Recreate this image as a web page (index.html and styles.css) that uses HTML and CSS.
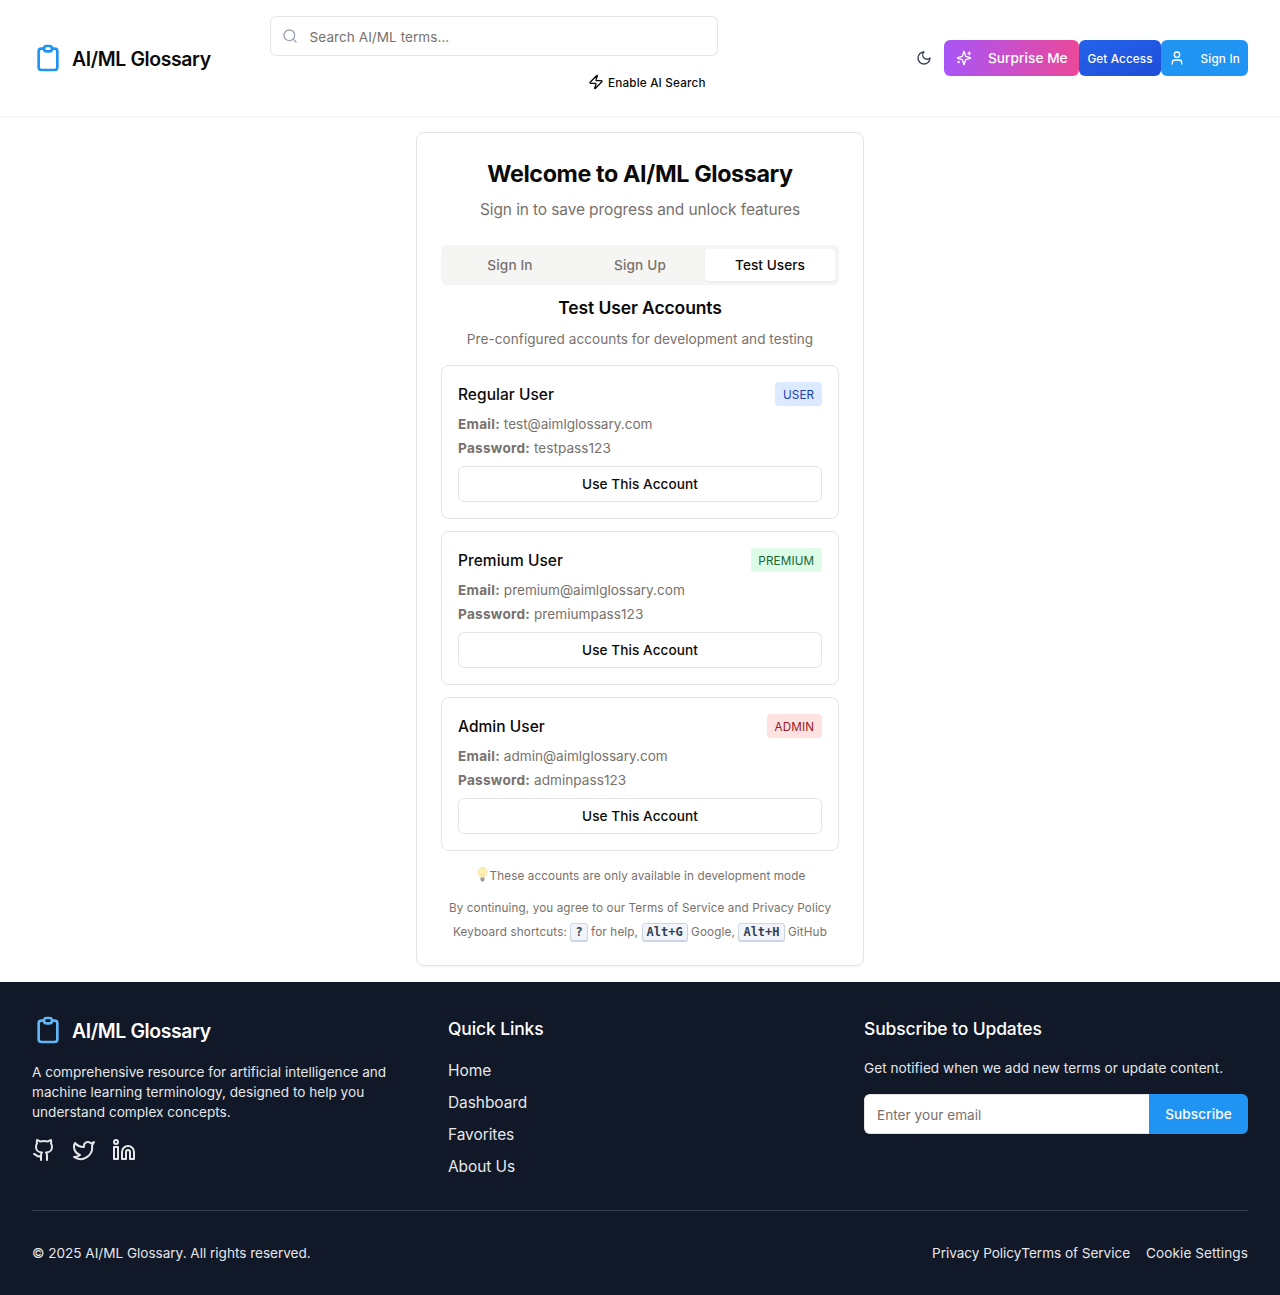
FILE: index.html
```html
<!DOCTYPE html>
<html lang="en">
<head>
<meta charset="utf-8">
<title>AI/ML Glossary</title>
<link rel="stylesheet" href="styles.css">
</head>
<body>
<header class="header">
  <a class="logo">
    <svg class="logo-icon" viewBox="0 0 24 24"><path d="M9 5H7a2 2 0 00-2 2v12a2 2 0 002 2h10a2 2 0 002-2V7a2 2 0 00-2-2h-2M9 5a2 2 0 002 2h2a2 2 0 002-2M9 5a2 2 0 012-2h2a2 2 0 012 2"/></svg>
    <span class="logo-text">AI/ML Glossary</span>
  </a>
  <div class="search">
    <div class="search-box">
      <svg class="icon" viewBox="0 0 24 24"><circle cx="11" cy="11" r="8"/><path d="m21 21-4.3-4.3"/></svg>
      <span>Search AI/ML terms...</span>
    </div>
    <button class="ai-toggle">
      <svg class="icon" viewBox="0 0 24 24"><path d="M4 14a1 1 0 0 1-.78-1.63l9.9-10.2a.5.5 0 0 1 .86.46l-1.92 6.02A1 1 0 0 0 13 10h7a1 1 0 0 1 .78 1.63l-9.9 10.2a.5.5 0 0 1-.86-.46l1.92-6.02A1 1 0 0 0 11 14z"/></svg>
      <span>Enable AI Search</span>
    </button>
  </div>
  <div class="actions">
    <button class="theme"><svg class="icon" viewBox="0 0 24 24"><path d="M12 3a6 6 0 0 0 9 9 9 9 0 1 1-9-9Z"/></svg></button>
    <button class="btn surprise">
      <svg class="icon" viewBox="0 0 24 24"><path d="M9.937 15.5A2 2 0 0 0 8.5 14.063l-6.135-1.582a.5.5 0 0 1 0-.962L8.5 9.936A2 2 0 0 0 9.937 8.5l1.582-6.135a.5.5 0 0 1 .963 0L14.063 8.5A2 2 0 0 0 15.5 9.937l6.135 1.581a.5.5 0 0 1 0 .964L15.5 14.063a2 2 0 0 0-1.437 1.437l-1.582 6.135a.5.5 0 0 1-.963 0z"/><path d="M20 3v4M22 5h-4M4 17v2M5 18H3"/></svg>
      <span>Surprise Me</span>
    </button>
    <button class="btn access">Get Access</button>
    <button class="btn signin">
      <svg class="icon" viewBox="0 0 24 24"><path d="M19 21v-2a4 4 0 0 0-4-4H9a4 4 0 0 0-4 4v2"/><circle cx="12" cy="7" r="4"/></svg>
      <span>Sign In</span>
    </button>
  </div>
</header>

<main class="main">
  <section class="card">
    <h1 class="title">Welcome to AI/ML Glossary</h1>
    <p class="subtitle">Sign in to save progress and unlock features</p>
    <div class="tabs">
      <button class="tab">Sign In</button>
      <button class="tab">Sign Up</button>
      <button class="tab active">Test Users</button>
    </div>
    <h2 class="panel-title">Test User Accounts</h2>
    <p class="panel-text">Pre-configured accounts for development and testing</p>
    <div class="accounts">
      <article class="account">
        <div class="account-head"><h3>Regular User</h3><span class="badge blue">USER</span></div>
        <p class="email"><strong>Email:</strong> test@aimlglossary.com</p>
        <p class="password"><strong>Password:</strong> testpass123</p>
        <button class="use">Use This Account</button>
      </article>
      <article class="account">
        <div class="account-head"><h3>Premium User</h3><span class="badge green">PREMIUM</span></div>
        <p class="email"><strong>Email:</strong> premium@aimlglossary.com</p>
        <p class="password"><strong>Password:</strong> premiumpass123</p>
        <button class="use">Use This Account</button>
      </article>
      <article class="account">
        <div class="account-head"><h3>Admin User</h3><span class="badge red">ADMIN</span></div>
        <p class="email"><strong>Email:</strong> admin@aimlglossary.com</p>
        <p class="password"><strong>Password:</strong> adminpass123</p>
        <button class="use">Use This Account</button>
      </article>
    </div>
    <p class="note">
      <svg class="bulb" viewBox="0 0 12 16"><path d="M6 .8C3.300.8 1.500 2.700 1.500 5.200c0 2 1.500 3.200 2.200 5.300h4.600c.7-2.100 2.200-3.300 2.200-5.300C10.500 2.700 8.700.8 6 .8z" fill="#fdf0b4" stroke="#f5dfa0" stroke-width=".8"/><path d="M5 10V6.500L6 7.300l1-.8V10" fill="none" stroke="#f3cf80" stroke-width=".5"/><path d="M4 10.700h4v2.300L7 14.500H5L4 13z" fill="#9b9b98"/></svg><span>These accounts are only available in development mode</span>
    </p>
    <p class="legal">By continuing, you agree to our Terms of Service and Privacy Policy</p>
    <p class="shortcuts">Keyboard shortcuts: <kbd>?</kbd> for help, <kbd>Alt+G</kbd> Google, <kbd>Alt+H</kbd> GitHub</p>
  </section>
</main>

<footer class="footer">
  <div class="columns">
    <div>
      <a class="logo">
        <svg class="logo-icon" viewBox="0 0 24 24"><path d="M9 5H7a2 2 0 00-2 2v12a2 2 0 002 2h10a2 2 0 002-2V7a2 2 0 00-2-2h-2M9 5a2 2 0 002 2h2a2 2 0 002-2M9 5a2 2 0 012-2h2a2 2 0 012 2"/></svg>
        <span class="logo-text">AI/ML Glossary</span>
      </a>
      <p class="about">A comprehensive resource for artificial intelligence and<br>machine learning terminology, designed to help you<br>understand complex concepts.</p>
      <div class="social">
        <svg viewBox="0 0 24 24"><path d="M15 22v-4a4.800 4.800 0 0 0-1-3.500c3 0 6-2 6-5.500.08-1.250-.27-2.480-1-3.500.28-1.150.28-2.350 0-3.500 0 0-1 0-3 1.500-2.640-.5-5.360-.5-8 0C6 2 5 2 5 2c-.3 1.150-.3 2.350 0 3.500A5.403 5.403 0 0 0 4 9c0 3.500 3 5.500 6 5.500-.39.490-.68 1.050-.85 1.650-.17.600-.22 1.230-.15 1.850v4"/><path d="M9 18c-4.510 2-5-2-7-2"/></svg>
        <svg viewBox="0 0 24 24"><path d="M22 4s-.7 2.100-2 3.400c1.600 10-9.400 17.300-18 11.600 2.200.1 4.400-.6 6-2C3 15.500.5 9.600 3 5c2.200 2.600 5.600 4.100 9 4-.9-4.200 4-6.600 7-3.800 1.100 0 3-1.200 3-1.200z"/></svg>
        <svg viewBox="0 0 24 24"><path d="M16 8a6 6 0 0 1 6 6v7h-4v-7a2 2 0 0 0-2-2 2 2 0 0 0-2 2v7h-4v-7a6 6 0 0 1 6-6z"/><rect width="4" height="12" x="2" y="9"/><circle cx="4" cy="4" r="2"/></svg>
      </div>
    </div>
    <div>
      <h3 class="foot-title">Quick Links</h3>
      <ul class="links"><li>Home</li><li>Dashboard</li><li>Favorites</li><li>About Us</li></ul>
    </div>
    <div>
      <h3 class="foot-title">Subscribe to Updates</h3>
      <p class="sub-text">Get notified when we add new terms or update content.</p>
      <form class="subscribe"><span class="field">Enter your email</span><button type="button">Subscribe</button></form>
    </div>
  </div>
  <div class="bottom">
    <span>© 2025 AI/ML Glossary. All rights reserved.</span>
    <nav><a>Privacy Policy</a><a>Terms of Service</a><a class="cookie">Cookie Settings</a></nav>
  </div>
</footer>
</body>
</html>
```
FILE: styles.css
```css
* { box-sizing: border-box; margin: 0; padding: 0; }
body {
  font: 400 13.6px/20px Inter, sans-serif;
  letter-spacing: 0.03px;
  color: #0c0a09;
  background: #fff;
}
button { font: inherit; letter-spacing: inherit; color: inherit; background: none; border: 0; white-space: nowrap; }
svg { display: block; flex: none; fill: none; stroke: currentColor; stroke-width: 2; stroke-linecap: round; stroke-linejoin: round; }
.icon { width: 16px; height: 16px; }

.header {
  display: flex;
  align-items: center;
  height: 117px;
  padding: 0 32px;
  border-bottom: 1px solid #f3f4f6;
  box-shadow: 0 1px 1px rgba(0, 0, 0, .02);
}
.logo { display: flex; align-items: center; gap: 8px; height: 32px; }
.logo-icon { width: 32px; height: 32px; color: #2094f3; }
.logo-text { font-size: 19.4px; line-height: 28px; font-weight: 600; letter-spacing: -0.36px; padding-top: 2px; }
.header .logo { width: 237.6px; }
.search { display: flex; flex-direction: column; align-items: flex-end; gap: 8px; width: 448px; }
.search-box {
  display: flex;
  align-items: center;
  gap: 12px;
  width: 100%;
  height: 40px;
  padding: 1px 11px 0;
  border: 1px solid #e5e5e5;
  border-radius: 6px;
  color: #78716c;
}
.search-box .icon { color: #9ca3af; margin-top: -2px; }
.ai-toggle {
  display: flex;
  align-items: center;
  gap: 4px;
  height: 36px;
  padding: 0 12px;
  font-size: 11.7px;
  font-weight: 480;
  letter-spacing: 0.18px;
}
.ai-toggle span, .signin span { padding-top: 1px; }
.actions { display: flex; margin-left: auto; }
.theme { width: 40px; height: 36px; display: flex; align-items: center; justify-content: center; color: #374151; }
.btn { display: flex; align-items: center; gap: 16px; height: 36px; border-radius: 6px; color: #fff; font-weight: 460; }
.surprise { width: 135.4px; padding: 0 12px; letter-spacing: 0.06px; background: linear-gradient(to right, #a855f7, #ec4899); }
.access { width: 81.1px; padding: 1px 8px 0; font-size: 11.7px; letter-spacing: 0.15px; background: linear-gradient(to bottom right, #2563eb, #1d4ed8); }
.signin { width: 87.5px; padding: 0 8px; font-size: 11.7px; letter-spacing: 0.2px; background: #2094f3; }

.main { display: flex; justify-content: center; padding: 15px 16px 16px; }
.card {
  width: 448px;
  height: 834px;
  padding: 24px;
  border: 1px solid #e5e5e5;
  border-radius: 8px;
  box-shadow: 0 1px 2px rgba(0, 0, 0, .05);
  text-align: center;
}
.title { padding-top: 1px; font-size: 23.3px; line-height: 32px; font-weight: 700; letter-spacing: -0.38px; }
.subtitle { margin: 8px 0 23px; font-size: 15.5px; line-height: 24px; letter-spacing: -0.12px; color: #78716c; }
.tabs { display: grid; grid-template-columns: repeat(3, 1fr); height: 40px; padding: 4px; border-radius: 6px; background: #f5f5f4; }
.tab { border-radius: 4px; font-weight: 480; color: #78716c; letter-spacing: 0.15px; }
.tab.active { background: #fff; color: #0c0a09; letter-spacing: 0.06px; box-shadow: 0 1px 2px rgba(0, 0, 0, .05); }
.panel-title { margin-top: 9px; font-size: 17.5px; line-height: 28px; font-weight: 600; letter-spacing: -0.11px; }
.panel-text { margin-top: 7px; color: #78716c; letter-spacing: 0.04px; }
.accounts { display: grid; gap: 12px; margin-top: 16px; text-align: left; }
.account { height: 154px; padding: 16px; border: 1px solid #e5e5e5; border-radius: 8px; }
.account-head { display: flex; justify-content: space-between; height: 24px; }
.account-head h3 { padding-top: 1px; font-size: 15.5px; line-height: 24px; font-weight: 480; letter-spacing: 0.03px; }
.badge { padding: 5px 7.8px 3px; border-radius: 4px; font-size: 11.7px; line-height: 16px; letter-spacing: 0.13px; }
.blue { background: #dbeafe; color: #1e40af; }
.green { background: #dcfce7; color: #166534; }
.red { background: #fee2e2; color: #991b1b; }
.email, .password { margin-top: 8px; color: #78716c; letter-spacing: -0.02px; }
.password { margin-top: 4px; letter-spacing: 0.03px; }
.email strong, .password strong { font-weight: 700; letter-spacing: 0.26px; }
.use { display: block; width: 100%; height: 36px; margin-top: 8px; border: 1px solid #e5e5e5; border-radius: 6px; font-weight: 480; letter-spacing: 0.07px; }
.note, .legal, .shortcuts { font-size: 11.7px; line-height: 16px; letter-spacing: 0.11px; color: #78716c; white-space: nowrap; }
.note { display: flex; justify-content: center; gap: 1px; margin-top: 16px; padding-left: 1px; }
.note span { padding-top: 1px; }
.bulb { width: 13px; height: 16px; stroke: none; }
.legal { margin-top: 16px; }
.shortcuts { margin-top: 7px; line-height: 18px; letter-spacing: 0.14px; }
kbd {
  display: inline-block;
  height: 18px;
  padding: 0 4px;
  border: 1px solid #cbd5e1;
  border-radius: 3px;
  background: #f1f5f9;
  box-shadow: 0 1px 0 #cbd5e1;
  color: #334155;
  font: 700 12px/16px "DejaVu Sans Mono", monospace;
  letter-spacing: 0;
  vertical-align: top;
}

.footer { height: 313px; padding: 32px; background: #111827; color: #e5e7eb; }
.columns { display: grid; grid-template-columns: repeat(3, 1fr); gap: 32px; height: 197px; border-bottom: 1px solid #374151; }
.footer .logo-icon { color: #64b5f6; }
.footer .logo-text, .foot-title { color: #fff; }
.about { margin-top: 16px; letter-spacing: 0; white-space: nowrap; }
.social { display: flex; gap: 16px; margin-top: 16px; }
.social svg { width: 24px; height: 24px; }
.foot-title { padding-top: 1px; font-size: 17.5px; line-height: 28px; font-weight: 460; letter-spacing: -0.13px; }
.links { display: grid; gap: 8px; margin-top: 16px; list-style: none; font-size: 15.5px; line-height: 24px; letter-spacing: -0.08px; }
.sub-text { margin-top: 15px; white-space: nowrap; }
.subscribe { display: flex; height: 40px; margin-top: 16px; }
.field { flex: 1; padding: 10px 12px 0; border: 1px solid #e5e5e5; border-right: 0; border-radius: 6px 0 0 6px; background: #fff; color: #78716c; }
.subscribe button { width: 99px; border-radius: 0 6px 6px 0; background: #2094f3; color: #fff; font-weight: 460; letter-spacing: 0.1px; }
.bottom { display: flex; justify-content: space-between; padding-top: 32px; letter-spacing: -0.025px; }
.bottom nav { display: flex; letter-spacing: -0.05px; }
.cookie { margin-left: 16px; letter-spacing: 0.08px; }
```
